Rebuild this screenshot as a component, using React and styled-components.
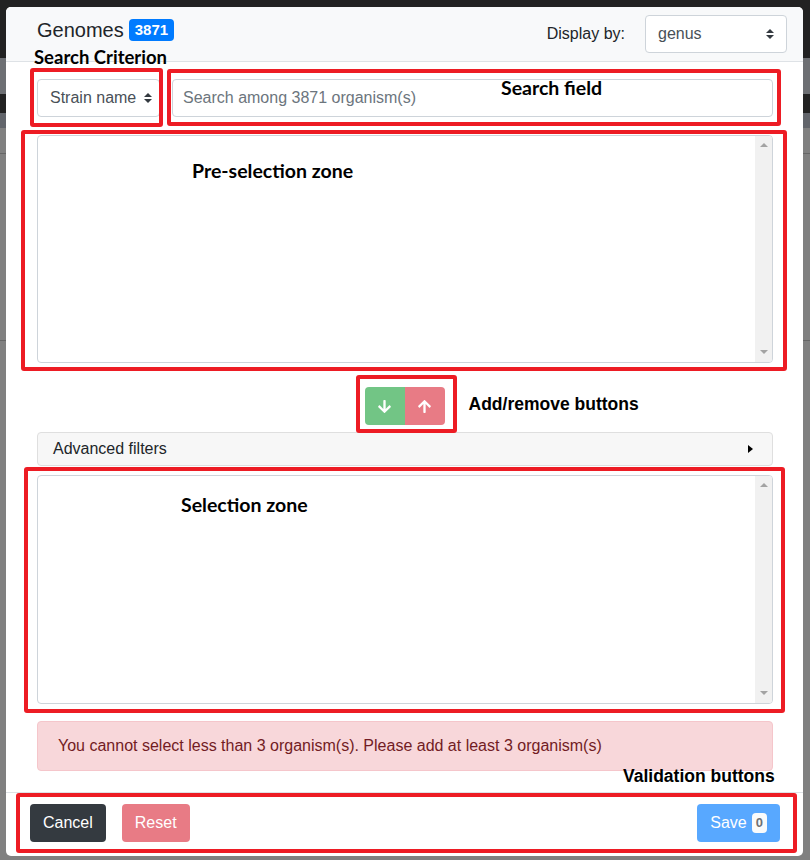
import React from 'react';
import styled, { createGlobalStyle } from 'styled-components';
import { FaArrowDown, FaArrowUp } from 'react-icons/fa';

const GlobalStyle = createGlobalStyle`
  html, body {
    margin: 0;
    padding: 0;
  }
  body {
    font-family: 'Liberation Sans', Arial, sans-serif;
    color: #212529;
    font-size: 16px;
  }
  * {
    box-sizing: border-box;
  }
`;

// dimmed page behind the modal
const Page = styled.div`
  width: 810px;
  height: 860px;
  overflow: hidden;
  padding: 7px 7px 4px 6px;
  background: linear-gradient(
    to bottom,
    #222 0 58px,
    #6d6f73 58px 94px,
    #222 94px 113px,
    #62656b 113px 128px,
    #808080 128px 153px,
    #666 153px 154px,
    #808080 154px 340px,
    #666 340px 341px,
    #808080 341px
  );
`;

const Modal = styled.div`
  background: #fff;
  border-radius: 5px;
  height: 849px;
  display: flex;
  flex-direction: column;
`;

const Header = styled.div`
  display: flex;
  align-items: flex-start;
  justify-content: space-between;
  padding: 8px 16px 8px 31px;
  background: #f8f9fa;
  border-bottom: 1px solid #dee2e6;
  border-radius: 5px 5px 0 0;
`;

const TitleGroup = styled.div`
  display: flex;
  align-items: center;
  gap: 5px;
  height: 30px;
`;

const Title = styled.h5`
  margin: 0;
  font-size: 20px;
  font-weight: 400;
  line-height: 30px;
`;

const Badge = styled.span`
  display: inline-block;
  padding: ${p => p.$light ? '3px 4px' : '3px 6px'};
  font-size: ${p => p.$light ? 13 : 15}px;
  font-weight: 700;
  line-height: ${p => p.$light ? 14 : 16}px;
  border-radius: 4px;
  background: ${p => p.$light ? '#f8f9fa' : '#007bff'};
  color: ${p => p.$light ? '#212529' : '#fff'};
`;

const DisplayBy = styled.div`
  display: flex;
  align-items: center;
  gap: 20px;
`;

const SelectBox = styled.div`
  width: ${p => p.$width}px;
  height: 38px;
  display: flex;
  align-items: center;
  justify-content: space-between;
  padding: 0 ${p => p.$caretGap}px 0 12px;
  background: #fff;
  border: 1px solid #ced4da;
  border-radius: 4px;
  color: #495057;
  font-size: 16px;
  flex: none;
`;

const Body = styled.div`
  padding: 17px 30px 0 31px;
  display: flex;
  flex-direction: column;
  flex: 1;
`;

const SearchRow = styled.div`
  display: flex;
  gap: 12px;
`;

const SearchInput = styled.input`
  width: 100%;
  height: 38px;
  padding: 0 10px;
  border: 1px solid #ced4da;
  border-radius: 4px;
  font: inherit;
  font-size: 16px;
  color: #495057;
  &::placeholder {
    color: #6c757d;
  }
`;

const ListBox = styled.div`
  height: ${p => p.$height}px;
  margin-top: ${p => p.$top}px;
  border: 1px solid #ced4da;
  border-radius: 4px;
  display: flex;
  justify-content: flex-end;
  overflow: hidden;
`;

const Scrollbar = styled.div`
  width: 17px;
  background: #f1f1f1;
  display: flex;
  flex-direction: column;
  justify-content: space-between;
  align-items: center;
  padding: 7px 0 8px;
`;

const ScrollArrow = styled.span`
  width: 0;
  height: 0;
  border-left: 4px solid transparent;
  border-right: 4px solid transparent;
  ${p => p.$down
    ? 'border-top: 4px solid #a3a3a3;'
    : 'border-bottom: 4px solid #a3a3a3;'}
`;

const TransferRow = styled.div`
  display: flex;
  justify-content: center;
  margin-top: 24px;
  padding-right: 1px;
`;

const BtnGroup = styled.div`
  display: flex;
`;

const IconButton = styled.button`
  width: 40px;
  height: 38px;
  border: none;
  display: flex;
  align-items: center;
  justify-content: center;
  color: #fff;
  opacity: 0.65;
  background: ${p => p.$tone === 'success' ? '#28a745' : '#dc3545'};
  border-radius: ${p => p.$first ? '4px 0 0 4px' : '0 4px 4px 0'};
  font-size: 15px;
`;

const FilterBar = styled.div`
  margin-top: 7px;
  height: 34px;
  display: flex;
  align-items: center;
  justify-content: space-between;
  padding: 0 19px 0 15px;
  background: #f7f7f7;
  border: 1px solid #dfdfdf;
  border-radius: 4px;
  font-size: 16px;
`;

const CaretRight = styled.span`
  width: 0;
  height: 0;
  border-top: 4px solid transparent;
  border-bottom: 4px solid transparent;
  border-left: 5px solid #000;
`;

const Alert = styled.div`
  margin-top: 17px;
  padding: 12px 20px;
  line-height: 24px;
  background: #f8d7da;
  border: 1px solid #f5c6cb;
  border-radius: 4px;
  color: #721c24;
  font-size: 16px;
`;

const Footer = styled.div`
  display: flex;
  align-items: center;
  justify-content: space-between;
  padding: 11px 23px 14px 24px;
  border-top: 1px solid #dee2e6;
`;

const FooterLeft = styled.div`
  display: flex;
  gap: 16px;
`;

const Button = styled.button`
  height: 38px;
  padding: 0 12px;
  border: 1px solid transparent;
  border-radius: 4px;
  font: inherit;
  font-size: 16px;
  color: #fff;
  display: flex;
  align-items: center;
  gap: 5px;
  background: ${p => ({ dark: '#343a40', danger: '#dc3545', primary: '#007bff' })[p.$tone]};
  opacity: ${p => p.disabled ? 0.65 : 1};
`;

// annotation layer drawn on top of the screenshot
const Marked = styled.div`
  position: relative;
  flex: ${p => p.$grow ? 1 : 'none'};
`;

const Frame = styled.span`
  position: absolute;
  top: ${p => p.$t}px;
  right: ${p => p.$r}px;
  bottom: ${p => p.$b}px;
  left: ${p => p.$l}px;
  border: 4px solid #ed1c24;
  border-radius: 3px;
  pointer-events: none;
`;

const Note = styled.span`
  position: absolute;
  left: ${p => p.$x}px;
  top: ${p => p.$y}px;
  line-height: 20px;
  white-space: nowrap;
  font-weight: 700;
  color: #000;
  font-family: ${p => p.$arial ? "'Liberation Sans', Arial, sans-serif" : "Lato, 'Open Sans', sans-serif"};
  font-size: ${p => p.$size || 19.5}px;
  pointer-events: none;
`;

const DoubleCaret = () => (
  <svg width="8" height="10" viewBox="0 0 8 10">
    <path d="M4 0 L8 4 L0 4 Z M0 6 L8 6 L4 10 Z" fill="#343a40" />
  </svg>
);

const Annot = ({ frame, note, children, grow }) => (
  <Marked $grow={grow}>
    {children}
    <Frame $t={frame[0]} $r={frame[1]} $b={frame[2]} $l={frame[3]} />
    {note && (
      <Note $x={note.x} $y={note.y} $arial={note.arial} $size={note.size}>
        {note.text}
      </Note>
    )}
  </Marked>
);

const List = ({ height, top }) => (
  <ListBox $height={height} $top={top}>
    <Scrollbar>
      <ScrollArrow />
      <ScrollArrow $down />
    </Scrollbar>
  </ListBox>
);

const App = () => {
  const total = 3871;
  const minimum = 3;

  return (
    <>
      <GlobalStyle />
      <Page>
        <Modal>
          <Header>
            <TitleGroup>
              <Title>Genomes</Title>
              <Badge>{total}</Badge>
            </TitleGroup>
            <DisplayBy>
              <span>Display by:</span>
              <SelectBox $width={142} $caretGap={12}>
                genus <DoubleCaret />
              </SelectBox>
            </DisplayBy>
          </Header>

          <Body>
            <SearchRow>
              <Annot frame={[-11, -3, -10, -7]} note={{ text: 'Search Criterion', x: -3, y: -32, size: 18.5 }}>
                <SelectBox $width={123} $caretGap={7}>
                  Strain name <DoubleCaret />
                </SelectBox>
              </Annot>
              <Annot grow frame={[-10, -8, -9, -5]} note={{ text: 'Search field', x: 329, y: -1 }}>
                <SearchInput placeholder={`Search among ${total} organism(s)`} />
              </Annot>
            </SearchRow>

            <Annot frame={[13, -14, -8, -16]} note={{ text: 'Pre-selection zone', x: 155, y: 44 }}>
              <List height={228} top={18} />
            </Annot>

            <TransferRow>
              <Annot frame={[-12, -12, -8, -9]} note={{ text: 'Add/remove buttons', x: 104, y: 7, arial: true, size: 17.5 }}>
                <BtnGroup>
                  <IconButton $tone="success" $first disabled><FaArrowDown /></IconButton>
                  <IconButton $tone="danger" disabled><FaArrowUp /></IconButton>
                </BtnGroup>
              </Annot>
            </TransferRow>

            <FilterBar>
              Advanced filters
              <CaretRight />
            </FilterBar>

            <Annot frame={[1, -12, -9, -13]} note={{ text: 'Selection zone', x: 144, y: 29 }}>
              <List height={229} top={9} />
            </Annot>

            <Alert>
              You cannot select less than {minimum} organism(s). Please add at least {minimum} organism(s)
            </Alert>
          </Body>

          <Annot frame={[1, 6, 3, 10]} note={{ text: 'Validation buttons', x: 617, y: -26, arial: true, size: 17.5 }}>
            <Footer>
              <FooterLeft>
                <Button $tone="dark">Cancel</Button>
                <Button $tone="danger" disabled>Reset</Button>
              </FooterLeft>
              <Button $tone="primary" disabled>
                Save <Badge $light>0</Badge>
              </Button>
            </Footer>
          </Annot>
        </Modal>
      </Page>
    </>
  );
};

export default App;
